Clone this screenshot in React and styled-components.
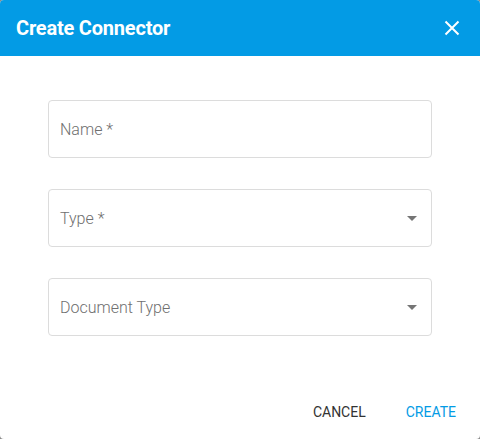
import React from 'react';
import styled, { createGlobalStyle } from 'styled-components';

const GlobalStyle = createGlobalStyle`
  html, body {
    margin: 0;
    padding: 0;
    background: #8a8a8a;
    font-family: Roboto, "Liberation Sans", Arial, sans-serif;
  }
`;

const Dialog = styled.div`
  width: 480px;
  height: 439px;
  background: #ffffff;
  border-radius: 4px;
  overflow: hidden;
  display: flex;
  flex-direction: column;
`;

const Header = styled.div`
  height: 56px;
  background: #039be5;
  display: flex;
  align-items: center;
  justify-content: space-between;
  padding: 0 12px 0 16px;
  flex-shrink: 0;
`;

const Title = styled.h2`
  margin: 0;
  color: #ffffff;
  font-size: 20px;
  font-weight: 700;
  letter-spacing: -0.2px;
`;

const CloseButton = styled.button`
  width: 32px;
  height: 32px;
  border: none;
  background: transparent;
  display: flex;
  align-items: center;
  justify-content: center;
  padding: 0;
  cursor: pointer;
`;

const Body = styled.div`
  flex: 1;
  padding: 44px 48px 0 48px;
  display: flex;
  flex-direction: column;
  gap: 31px;
`;

const Field = styled.div`
  height: 58px;
  border: 1px solid #dcdcdc;
  border-radius: 4px;
  box-sizing: border-box;
  display: flex;
  align-items: center;
  justify-content: space-between;
  padding: 0 14px 0 11px;
`;

const Label = styled.span`
  font-size: 16px;
  font-weight: 300;
  color: #6f6f6f;
`;

const Arrow = styled.span`
  width: 0;
  height: 0;
  border-left: 5px solid transparent;
  border-right: 5px solid transparent;
  border-top: 5px solid #757575;
`;

const Actions = styled.div`
  display: flex;
  justify-content: flex-end;
  gap: 8px;
  padding: 0 8px 9px 0;
`;

const ActionButton = styled.button`
  height: 36px;
  min-width: 64px;
  padding: 0 16px;
  border: none;
  background: transparent;
  font-family: Roboto, "Liberation Sans", Arial, sans-serif;
  font-size: 14px;
  font-weight: 400;
  text-transform: uppercase;
  color: ${(p) => (p.primary ? '#039be5' : '#333333')};
  cursor: pointer;
`;

const fields = [
  { label: 'Name *', select: false },
  { label: 'Type *', select: true },
  { label: 'Document Type', select: true },
];

const App = () => {
  return (
    <>
      <GlobalStyle />
      <Dialog>
        <Header>
          <Title>Create Connector</Title>
          <CloseButton aria-label="close">
            <svg width="16" height="16" viewBox="0 0 16 16">
              <path d="M1.5 1.5 L14.5 14.5 M14.5 1.5 L1.5 14.5" stroke="#fff" strokeWidth="2" />
            </svg>
          </CloseButton>
        </Header>
        <Body>
          {fields.map((f) => (
            <Field key={f.label}>
              <Label>{f.label}</Label>
              {f.select && <Arrow />}
            </Field>
          ))}
        </Body>
        <Actions>
          <ActionButton>Cancel</ActionButton>
          <ActionButton primary>Create</ActionButton>
        </Actions>
      </Dialog>
    </>
  );
};

export default App;
